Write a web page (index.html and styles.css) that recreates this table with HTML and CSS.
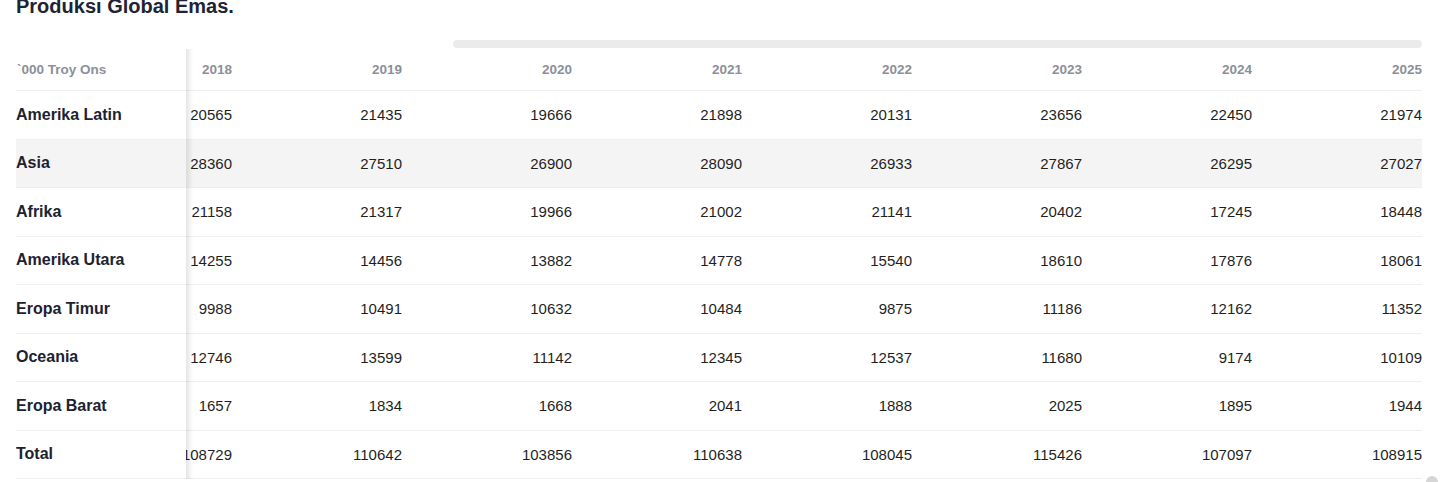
FILE: index.html
```html
<!DOCTYPE html>
<html lang="id">
<head>
<meta charset="utf-8">
<title>Produksi Global Emas</title>
<link rel="stylesheet" href="styles.css">
</head>
<body>
<section class="panel">
  <h2 class="title">Produksi Global Emas.</h2>
  <div class="scrollbar"><div class="thumb"></div></div>
  <div class="table-scroll">
    <table class="data">
      <thead>
        <tr>
          <th class="label">`000 Troy Ons</th>
          <th>2018</th><th>2019</th><th>2020</th><th>2021</th><th>2022</th><th>2023</th><th>2024</th><th>2025</th>
        </tr>
      </thead>
      <tbody>
        <tr><td class="label">Amerika Latin</td><td>20565</td><td>21435</td><td>19666</td><td>21898</td><td>20131</td><td>23656</td><td>22450</td><td>21974</td></tr>
        <tr class="hover"><td class="label">Asia</td><td>28360</td><td>27510</td><td>26900</td><td>28090</td><td>26933</td><td>27867</td><td>26295</td><td>27027</td></tr>
        <tr><td class="label">Afrika</td><td>21158</td><td>21317</td><td>19966</td><td>21002</td><td>21141</td><td>20402</td><td>17245</td><td>18448</td></tr>
        <tr><td class="label">Amerika Utara</td><td>14255</td><td>14456</td><td>13882</td><td>14778</td><td>15540</td><td>18610</td><td>17876</td><td>18061</td></tr>
        <tr><td class="label">Eropa Timur</td><td>9988</td><td>10491</td><td>10632</td><td>10484</td><td>9875</td><td>11186</td><td>12162</td><td>11352</td></tr>
        <tr><td class="label">Oceania</td><td>12746</td><td>13599</td><td>11142</td><td>12345</td><td>12537</td><td>11680</td><td>9174</td><td>10109</td></tr>
        <tr><td class="label">Eropa Barat</td><td>1657</td><td>1834</td><td>1668</td><td>2041</td><td>1888</td><td>2025</td><td>1895</td><td>1944</td></tr>
        <tr><td class="label">Total</td><td>108729</td><td>110642</td><td>103856</td><td>110638</td><td>108045</td><td>115426</td><td>107097</td><td>108915</td></tr>
      </tbody>
    </table>
  </div>
</section>
<div class="page-thumb"></div>
</body>
</html>
```

FILE: styles.css
```css
html, body {
  margin: 0;
  padding: 0;
  background: #ffffff;
  font-family: "Liberation Sans", Arial, sans-serif;
  overflow: hidden;
}

.panel {
  padding: 0 18px 0 16px;
}

.title {
  margin: -6px 0 0 0;
  font-size: 20px;
  line-height: 24px;
  font-weight: 700;
  color: #1e2433;
}

.scrollbar {
  display: flex;
  justify-content: flex-end;
  margin-top: 22px;
  height: 8px;
}

.thumb {
  width: 969px;
  height: 8px;
  border-radius: 4px;
  background: #ebebeb;
}

.table-scroll {
  margin-top: 1px;
  overflow-x: auto;
  scrollbar-width: none;
  direction: rtl;
}

.data {
  direction: ltr;
  border-collapse: collapse;
  table-layout: fixed;
  width: 1530px;
}

.data th,
.data td {
  width: 170px;
  padding: 0;
  text-align: right;
  border-bottom: 1px solid #efefef;
  white-space: nowrap;
}

.data th {
  height: 41px;
  font-size: 13.5px;
  font-weight: 700;
  color: #8b9099;
}

.data td {
  height: 47.5px;
  font-size: 15px;
  color: #1f1f1f;
}

.data .label {
  position: sticky;
  left: 0;
  z-index: 1;
  text-align: left;
  background: #ffffff;
  font-weight: 700;
  font-size: 16px;
  color: #1d2231;
}

.data th.label {
  font-size: 13.5px;
  color: #8b9099;
  text-indent: 1px;
}

.data .label::after {
  content: "";
  position: absolute;
  top: 0;
  right: -7px;
  bottom: -1px;
  width: 7px;
  background: linear-gradient(to right, rgba(0, 0, 0, 0.1), rgba(0, 0, 0, 0));
}

.data tr.hover td {
  background: #f4f4f4;
}

.page-thumb {
  position: fixed;
  right: 2px;
  bottom: -6px;
  width: 12px;
  height: 12px;
  border-radius: 50%;
  background: #d6d6d6;
}
```
